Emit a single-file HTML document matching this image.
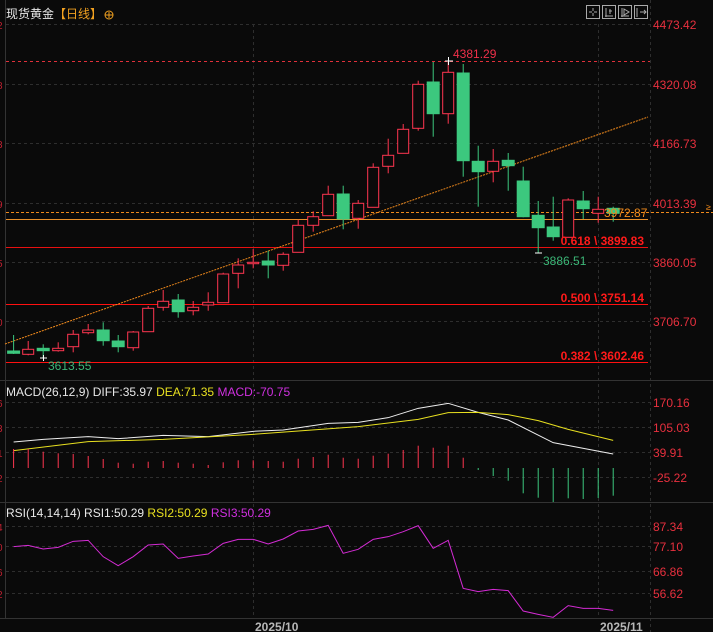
<!DOCTYPE html>
<html><head><meta charset="utf-8"><style>
html,body{margin:0;padding:0;background:#0a0a0a;width:713px;height:632px;overflow:hidden}
svg{display:block}
text{font-family:"Liberation Sans","Noto Sans CJK SC",sans-serif}
</style></head><body>
<svg width="713" height="632" viewBox="0 0 713 632" xmlns="http://www.w3.org/2000/svg">
<rect width="713" height="632" fill="#0a0a0a"/>
<g stroke="#2e2e2e" stroke-dasharray="3,3" stroke-width="1">
<line x1="6" y1="24.5" x2="650" y2="24.5"/><line x1="6" y1="84.5" x2="650" y2="84.5"/><line x1="6" y1="143.5" x2="650" y2="143.5"/><line x1="6" y1="203.5" x2="650" y2="203.5"/><line x1="6" y1="262.5" x2="650" y2="262.5"/><line x1="6" y1="321.5" x2="650" y2="321.5"/>
<line x1="6" y1="402.5" x2="650" y2="402.5"/><line x1="6" y1="427.5" x2="650" y2="427.5"/><line x1="6" y1="452.5" x2="650" y2="452.5"/><line x1="6" y1="477.5" x2="650" y2="477.5"/>
<line x1="6" y1="526.5" x2="650" y2="526.5"/><line x1="6" y1="546.5" x2="650" y2="546.5"/><line x1="6" y1="571.5" x2="650" y2="571.5"/><line x1="6" y1="593.5" x2="650" y2="593.5"/>
<line x1="253.5" y1="24" x2="253.5" y2="618"/><line x1="598.5" y1="24" x2="598.5" y2="618"/><line x1="650.5" y1="0" x2="650.5" y2="632"/>
</g>
<g stroke="#333" stroke-width="1">
<line x1="5.5" y1="0" x2="5.5" y2="618"/>
<line x1="0" y1="380.5" x2="713" y2="380.5"/><line x1="0" y1="502.5" x2="713" y2="502.5"/><line x1="0" y1="618.5" x2="713" y2="618.5"/>
</g>
<line x1="6" y1="61.5" x2="650" y2="61.5" stroke="#e0303a" stroke-dasharray="3,3"/>
<line x1="6" y1="212.5" x2="713" y2="212.5" stroke="#f08a1c" stroke-dasharray="3,2"/>
<line x1="6" y1="219.5" x2="648" y2="219.5" stroke="#e8902c"/>
<line x1="6" y1="247.5" x2="648" y2="247.5" stroke="#e81010"/>
<line x1="6" y1="304.5" x2="648" y2="304.5" stroke="#ff1010"/>
<line x1="6" y1="362.5" x2="648" y2="362.5" stroke="#ff1010"/>
<line x1="5" y1="344" x2="648" y2="117" stroke="#f08a1c" stroke-dasharray="2,1"/>
<g stroke-width="1">
<g stroke="#3cc87e" fill="#3cc87e">
<line x1="13.6" y1="335" x2="13.6" y2="354"/><rect x="7.6" y="351" width="12" height="2.3"/>
<line x1="43.2" y1="344.3" x2="43.2" y2="358.3"/><rect x="37.2" y="348.3" width="12" height="2.4"/>
<line x1="103.2" y1="322.3" x2="103.2" y2="345.7"/><rect x="97.2" y="330" width="12" height="10.7"/>
<line x1="118.2" y1="335" x2="118.2" y2="352.3"/><rect x="112.2" y="341" width="12" height="5.7"/>
<line x1="178.2" y1="294" x2="178.2" y2="317.7"/><rect x="172.2" y="300" width="12" height="11.7"/>
<line x1="268.2" y1="250.7" x2="268.2" y2="278.3"/><rect x="262.2" y="261" width="12" height="4"/>
<line x1="343.2" y1="185.7" x2="343.2" y2="229.3"/><rect x="337.2" y="194" width="12" height="25"/>
<line x1="433.2" y1="62" x2="433.2" y2="136.7"/><rect x="427.2" y="82" width="12" height="31.7"/>
<line x1="463.2" y1="64" x2="463.2" y2="176.7"/><rect x="457.2" y="73" width="12" height="87.7"/>
<line x1="478.2" y1="145.7" x2="478.2" y2="206.7"/><rect x="472.2" y="161.3" width="12" height="10.4"/>
<line x1="508.2" y1="153" x2="508.2" y2="190.7"/><rect x="502.2" y="160.3" width="12" height="5.4"/>
<line x1="523.2" y1="166.7" x2="523.2" y2="217.3"/><rect x="517.2" y="181" width="12" height="35.7"/>
<line x1="538.2" y1="201" x2="538.2" y2="253.3"/><rect x="532.2" y="215.3" width="12" height="12.4"/>
<line x1="553.2" y1="196.7" x2="553.2" y2="240.7"/><rect x="547.2" y="227" width="12" height="9.7"/>
<line x1="583.2" y1="191" x2="583.2" y2="219"/><rect x="577.2" y="201" width="12" height="7.7"/>
<line x1="613.2" y1="206.7" x2="613.2" y2="221.7"/><rect x="607.2" y="208.3" width="12" height="5"/>
</g>
<g stroke="#ff3650" fill="#0a0a0a">
<line x1="28.2" y1="341" x2="28.2" y2="355.3"/><rect x="22.7" y="349.3" width="11" height="5"/>
<line x1="58.2" y1="342.3" x2="58.2" y2="351.7"/><rect x="52.7" y="348.3" width="11" height="2.4"/>
<line x1="73.2" y1="330" x2="73.2" y2="352.3"/><rect x="67.7" y="334.3" width="11" height="12.4"/>
<line x1="88.2" y1="324" x2="88.2" y2="334.3"/><rect x="82.7" y="330" width="11" height="2.7"/>
<line x1="133.2" y1="331" x2="133.2" y2="350.7"/><rect x="127.7" y="332" width="11" height="15.7"/>
<line x1="148.2" y1="306" x2="148.2" y2="331.7"/><rect x="142.7" y="308.3" width="11" height="23.4"/>
<line x1="163.2" y1="290" x2="163.2" y2="310.7"/><rect x="157.7" y="301.3" width="11" height="6"/>
<line x1="193.2" y1="301" x2="193.2" y2="315.3"/><rect x="187.7" y="307.3" width="11" height="3.4"/>
<line x1="208.2" y1="292.3" x2="208.2" y2="310.7"/><rect x="202.7" y="302.3" width="11" height="2.7"/>
<line x1="223.2" y1="272.7" x2="223.2" y2="302.7"/><rect x="217.7" y="274" width="11" height="28.7"/>
<line x1="238.2" y1="258.3" x2="238.2" y2="288.3"/><rect x="232.7" y="265" width="11" height="8.3"/>
<line x1="253.2" y1="249" x2="253.2" y2="268.3"/><rect x="247.7" y="262.3" width="11" height="1.4"/>
<line x1="283.2" y1="252.3" x2="283.2" y2="270.7"/><rect x="277.7" y="254.3" width="11" height="11"/>
<line x1="298.2" y1="219.7" x2="298.2" y2="252.3"/><rect x="292.7" y="225.3" width="11" height="27"/>
<line x1="313.2" y1="211.3" x2="313.2" y2="231.7"/><rect x="307.7" y="216.7" width="11" height="8.6"/>
<line x1="328.2" y1="185.7" x2="328.2" y2="215.7"/><rect x="322.7" y="194.3" width="11" height="21.4"/>
<line x1="358.2" y1="200" x2="358.2" y2="228.7"/><rect x="352.7" y="203.3" width="11" height="15"/>
<line x1="373.2" y1="163.3" x2="373.2" y2="207.3"/><rect x="367.7" y="167.3" width="11" height="40"/>
<line x1="388.2" y1="138.7" x2="388.2" y2="173.3"/><rect x="382.7" y="155.3" width="11" height="11"/>
<line x1="403.2" y1="124" x2="403.2" y2="153.3"/><rect x="397.7" y="129.3" width="11" height="24"/>
<line x1="418.2" y1="80.7" x2="418.2" y2="130.7"/><rect x="412.7" y="84.3" width="11" height="44"/>
<line x1="448.2" y1="60.7" x2="448.2" y2="123.7"/><rect x="442.7" y="72.3" width="11" height="41.4"/>
<line x1="493.2" y1="149" x2="493.2" y2="182.3"/><rect x="487.7" y="161.3" width="11" height="10"/>
<line x1="568.2" y1="198.3" x2="568.2" y2="237.3"/><rect x="562.7" y="200" width="11" height="37.3"/>
<line x1="598.2" y1="196.7" x2="598.2" y2="222.7"/><rect x="592.7" y="209.3" width="11" height="4"/>
</g>
</g>
<g stroke="#fff" stroke-width="1"><line x1="445" y1="61" x2="453" y2="61"/><line x1="448.5" y1="57" x2="448.5" y2="65"/>
<line x1="40" y1="358" x2="47" y2="358"/><line x1="43.5" y1="355" x2="43.5" y2="361"/>
<line x1="535" y1="253" x2="542" y2="253"/></g>
<text x="453" y="58" fill="#f0304a" font-size="12">4381.29</text>
<text x="48" y="370" fill="#3cb878" font-size="12">3613.55</text>
<text x="543" y="265" fill="#3cb878" font-size="12">3886.51</text>
<g fill="#ff1a1a" font-size="12" font-weight="bold" text-anchor="end">
<text x="644" y="245">0.618 \ 3899.83</text><text x="644" y="302">0.500 \ 3751.14</text><text x="644" y="360">0.382 \ 3602.46</text></g>
<text x="604" y="217" fill="#f08a1c" font-size="12">3972.87</text>
<text x="706" y="210" fill="#f08a1c" font-size="9">≥</text>
<g fill="#e8303e" font-size="12">
<text x="653" y="29">4473.42</text><text x="653" y="89">4320.08</text><text x="653" y="148">4166.73</text><text x="653" y="208">4013.39</text><text x="653" y="267">3860.05</text><text x="653" y="326">3706.70</text>
<text x="653" y="407">170.16</text><text x="653" y="432">105.03</text><text x="653" y="457">39.91</text><text x="653" y="482">-25.22</text>
<text x="653" y="531">87.34</text><text x="653" y="551">77.10</text><text x="653" y="576">66.86</text><text x="653" y="598">56.62</text>
</g>
<g fill="#c02030" font-size="10"><text x="-3" y="29">2</text><text x="-3" y="89">8</text><text x="-3" y="148">3</text><text x="-3" y="208">9</text><text x="-3" y="267">5</text><text x="-3" y="326">0</text><text x="-3" y="407">6</text><text x="-3" y="432">3</text><text x="-3" y="457">1</text><text x="-3" y="482">2</text><text x="-3" y="531">4</text><text x="-3" y="551">0</text><text x="-3" y="576">6</text><text x="-3" y="598">2</text></g>
<text x="6" y="18" font-size="12" fill="#e8e8e8">现货黄金<tspan fill="#f0a020">【日线】</tspan></text>
<circle cx="109" cy="15" r="4" fill="none" stroke="#f0a020"/><line x1="105" y1="15" x2="113" y2="15" stroke="#f0a020"/><line x1="109" y1="12" x2="109" y2="18" stroke="#f0a020"/>
<g stroke="#aaa" fill="none"><rect x="586.5" y="5.5" width="13" height="13"/><rect x="602.5" y="5.5" width="13" height="13"/><rect x="618.5" y="5.5" width="13" height="13"/><rect x="634.5" y="5.5" width="13" height="13"/>
<path d="M593 8v3M593 13v3M589 12h3M594 12h3"/><path d="M606 8v9M605 16h8M610 9v5M609 11h3"/><path d="M622 8v9M621 16h8M624 9l5 3-5 3z"/><path d="M637 8v9M640 12h6M644 10l2 2-2 2"/></g>
<text x="6" y="396" font-size="12" fill="#e8e8e8">MACD(26,12,9) DIFF:35.97 <tspan fill="#e8e020">DEA:71.35</tspan> <tspan fill="#d030e0">MACD:-70.75</tspan></text>
<g transform="translate(0,380) scale(0.45455,0.33333)" fill="none">
<polyline vector-effect="non-scaling-stroke" stroke="#eee" stroke-width="1" points="30,186 95,178 194,170 260,176 359,166 458,170 557,154 623,150 722,130 788,127 854,113 920,85 986,70 1052,97 1118,120 1217,188 1349,222"/>
<polyline vector-effect="non-scaling-stroke" stroke="#e8e020" stroke-width="1" points="30,212 194,185 359,178 557,163 788,140 920,118 986,98 1052,97 1118,104 1184,122 1250,148 1349,181"/>
</g>
<g stroke="#ff3650" stroke-width="1">
<line x1="13.6" y1="468" x2="13.6" y2="449"/><line x1="28.2" y1="468" x2="28.2" y2="449"/><line x1="43.2" y1="468" x2="43.2" y2="451.7"/><line x1="58.2" y1="468" x2="58.2" y2="453.3"/><line x1="73.2" y1="468" x2="73.2" y2="454"/><line x1="88.2" y1="468" x2="88.2" y2="456"/><line x1="103.2" y1="468" x2="103.2" y2="459"/><line x1="118.2" y1="468" x2="118.2" y2="462.7"/><line x1="133.2" y1="468" x2="133.2" y2="463.7"/><line x1="148.2" y1="468" x2="148.2" y2="461.7"/><line x1="163.2" y1="468" x2="163.2" y2="461"/><line x1="178.2" y1="468" x2="178.2" y2="462.7"/><line x1="193.2" y1="468" x2="193.2" y2="463.7"/><line x1="208.2" y1="468" x2="208.2" y2="465"/><line x1="223.2" y1="468" x2="223.2" y2="462.3"/><line x1="238.2" y1="468" x2="238.2" y2="460.3"/><line x1="253.2" y1="468" x2="253.2" y2="460.3"/><line x1="268.2" y1="468" x2="268.2" y2="461"/><line x1="283.2" y1="468" x2="283.2" y2="461.7"/><line x1="298.2" y1="468" x2="298.2" y2="458.7"/><line x1="313.2" y1="468" x2="313.2" y2="457"/><line x1="328.2" y1="468" x2="328.2" y2="454.7"/><line x1="343.2" y1="468" x2="343.2" y2="457.7"/><line x1="358.2" y1="468" x2="358.2" y2="458.7"/><line x1="373.2" y1="468" x2="373.2" y2="455.7"/><line x1="388.2" y1="468" x2="388.2" y2="453.7"/><line x1="403.2" y1="468" x2="403.2" y2="450"/><line x1="418.2" y1="468" x2="418.2" y2="445.7"/><line x1="433.2" y1="468" x2="433.2" y2="447.7"/><line x1="448.2" y1="468" x2="448.2" y2="445.7"/><line x1="463.2" y1="468" x2="463.2" y2="457.7"/>
</g>
<g stroke="#3cc87e" stroke-width="1">
<line x1="478.2" y1="468" x2="478.2" y2="470"/><line x1="493.2" y1="468" x2="493.2" y2="476"/><line x1="508.2" y1="468" x2="508.2" y2="480.7"/><line x1="523.2" y1="468" x2="523.2" y2="493.3"/><line x1="538.2" y1="468" x2="538.2" y2="497.7"/><line x1="553.2" y1="468" x2="553.2" y2="502"/><line x1="568.2" y1="468" x2="568.2" y2="498.3"/><line x1="583.2" y1="468" x2="583.2" y2="499"/><line x1="598.2" y1="468" x2="598.2" y2="498"/><line x1="613.2" y1="468" x2="613.2" y2="495.7"/>
</g>
<text x="6" y="517" font-size="12" fill="#e8e8e8">RSI(14,14,14) RSI1:50.29 <tspan fill="#e8e020">RSI2:50.29</tspan> <tspan fill="#d030e0">RSI3:50.29</tspan></text>
<g transform="translate(0,380) scale(0.45455,0.33333)" fill="none">
<polyline vector-effect="non-scaling-stroke" stroke="#d42bd4" stroke-width="1" points="30,500 62,496 95,507 128,502 161,484 194,481 227,530 260,557 293,530 326,495 359,492 392,535 425,528 458,522 491,490 524,478 557,478 590,492 623,477 656,453 689,448 722,436 755,520 788,508 821,478 854,470 887,455 920,437 953,505 986,481 1019,625 1052,635 1085,628 1118,632 1151,693 1184,703 1217,712 1250,677 1283,685 1316,685 1349,691"/>
</g>
<g fill="#b8b8b8" font-size="12" font-weight="bold"><text x="255" y="631">2025/10</text><text x="600" y="631">2025/11</text></g>
</svg>
</body></html>
